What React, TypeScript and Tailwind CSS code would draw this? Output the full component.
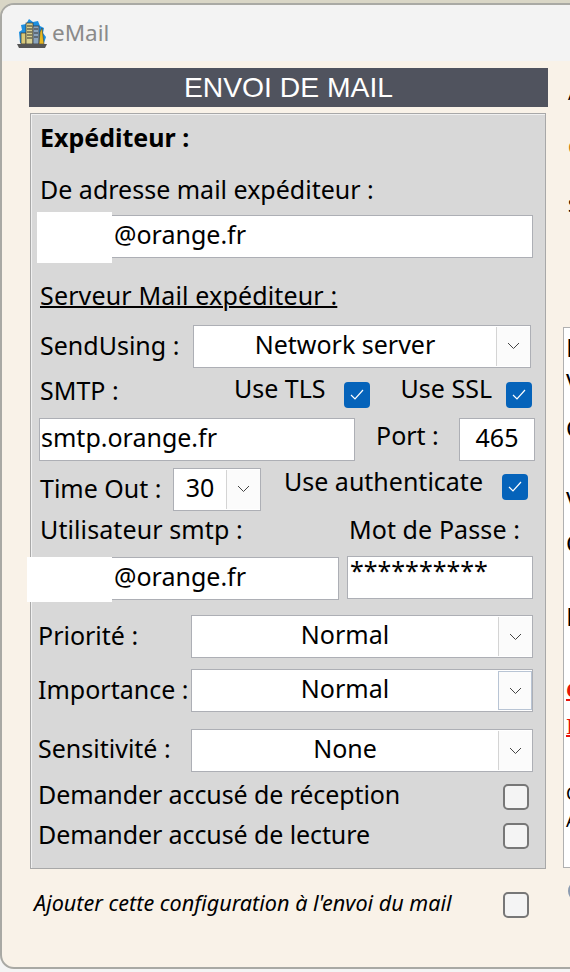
const sans = "font-['Noto_Sans','Open_Sans',sans-serif]";

function Chevron() {
  return (
    <svg width="13" height="8" viewBox="0 0 13 8" fill="none" stroke="#444" strokeWidth="1">
      <path d="M1 1l5.5 5.5L12 1" />
    </svg>
  );
}

function Select({ value, className }: { value: string; className: string }) {
  return (
    <div className={`flex h-[43px] items-center border border-[#adafb5] bg-white text-[25px] text-black ${className}`}>
      <span className="flex-1 pb-[3px] text-center">{value}</span>
      <span className="my-[1px] flex h-[39px] w-[34px] items-center justify-center border-l border-[#d4d4d4] bg-[#fbfbfb]">
        <Chevron />
      </span>
    </div>
  );
}

function Check({ on }: { on?: boolean }) {
  if (on) {
    return (
      <span className="flex h-[26px] w-[26px] shrink-0 items-center justify-center rounded-[4px] bg-[#0563ba]">
        <svg width="14" height="11" viewBox="0 0 14 11" fill="none" stroke="#fff" strokeWidth="1.2">
          <path d="M1 6l4 4 8-9" />
        </svg>
      </span>
    );
  }
  return <span className="mt-[4px] h-[26px] w-[26px] shrink-0 rounded-[5px] border-2 border-[#777] bg-[#f4f4f4]" />;
}

function Logo() {
  return (
    <svg width="32" height="32" viewBox="0 0 32 32">
      <path d="M4 26L3 15l3-2-1-5 5-1 3-5 4 3 5-1 2 5 4 2-1 5 3 4-2 6z" fill="#1d8fe0" />
      <rect x="5" y="16" width="5" height="11" fill="#d8c878" stroke="#333" strokeWidth="0.7" />
      <rect x="10" y="6" width="7" height="21" fill="#d8d090" stroke="#333" strokeWidth="0.7" />
      <rect x="17" y="9" width="6" height="18" fill="#8aa4bc" stroke="#333" strokeWidth="0.7" />
      <path d="M23 27l1-12 2-4 2 16z" fill="#e8b820" stroke="#333" strokeWidth="0.5" />
      <path d="M11 9h5M11 12h5M11 15h5M11 18h5M11 21h5M18 12h4M18 16h4M18 20h4" stroke="#333" strokeWidth="1" />
      <path d="M1 27h30l-2 4H3z" fill="#555" />
    </svg>
  );
}

export default function App() {
  return (
    <div className={`h-[972px] w-[570px] overflow-hidden bg-[linear-gradient(#d9d6c6_0_40px,#f4f4f4_40px)] pt-[3px] ${sans}`}>
      <div className="h-[966px] w-[620px] overflow-hidden rounded-[14px] border-2 border-[#a9a9a4] bg-[#f9f2e8]">
        <div className="flex h-[56px] items-center gap-[4px] bg-[#f3f3f3] pl-[14px]">
          <Logo />
          <span className="text-[22.5px] text-[#8a8a8a]">eMail</span>
        </div>
        <div className="flex">
          <div className="ml-[27px] mt-[7px] w-[519px] shrink-0">
            <div className="flex h-[39px] items-center justify-center bg-[#50535e] font-['Liberation_Sans'] text-[28.3px] text-white">
              ENVOI DE MAIL
            </div>
            <div className="ml-[1px] mt-[6px] h-[756px] w-[516px] border border-[#a8a8a8] bg-[#d8d8d8] text-[25px] text-black shadow-[inset_1px_1px_0_#f0f0f0]">
              <div className="pl-[9px] pt-[5px] font-bold">Expéditeur :</div>
              <div className="pl-[9px] pt-[14px]">De adresse mail expéditeur :</div>
              <div className="relative ml-[7px] mt-[7px] flex h-[43px] w-[495px] items-center border border-[#adafb5] bg-white pb-[4px] pl-[75px]">
                @orange.fr
                <span className="absolute left-[-2px] top-[-4px] h-[51px] w-[75px] bg-white" />
              </div>
              <div className="pl-[9px] pt-[19px] tracking-[0.15px] underline decoration-2">Serveur Mail expéditeur :</div>
              <div className="flex items-center pl-[9px] pt-[10px]">
                <span className="w-[153px]">SendUsing :</span>
                <Select value="Network server" className="w-[338px]" />
              </div>
              <div className="flex h-[50px] pl-[9px]">
                <span className="mt-[4px] w-[194px]">SMTP :</span>
                <span className="mt-[2px]">Use TLS</span>
                <span className="ml-[18px] mt-[14px]"><Check on /></span>
                <span className="ml-[31px] mt-[2px]">Use SSL</span>
                <span className="ml-[14px] mt-[14px]"><Check on /></span>
              </div>
              <div className="flex items-start pl-[8px]">
                <div className="flex h-[43px] w-[316px] items-center border border-[#adafb5] bg-white pb-[3px] pl-[1px]">smtp.orange.fr</div>
                <span className="ml-[21px] w-[83px] leading-[34px]">Port :</span>
                <div className="flex h-[43px] w-[76px] items-center justify-center border border-[#adafb5] bg-white pb-[3px]">465</div>
              </div>
              <div className="flex pl-[9px] pt-[7px]">
                <span className="mt-[2px] w-[133px]">Time Out :</span>
                <Select value="30" className="w-[88px]" />
                <span className="ml-[23px] mt-[-5px]">Use authenticate</span>
                <span className="ml-[19px] mt-[6px]"><Check on /></span>
              </div>
              <div className="flex justify-between pl-[9px] pr-[25px] tracking-[0.1px]">
                <span>Utilisateur smtp :</span>
                <span>Mot de Passe :</span>
              </div>
              <div className="flex items-start pl-[7px] pt-[8px]">
                <div className="relative mt-[1px] flex h-[43px] w-[301px] items-center border border-[#adafb5] bg-white pb-[3px] pl-[75px]">
                  @orange.fr
                  <span className="absolute left-[-12px] top-[-1px] h-[45px] w-[85px] bg-white" />
                </div>
                <div className="ml-[8px] h-[43px] w-[186px] border border-[#adafb5] bg-white pl-[2px] leading-[26px]">**********</div>
              </div>
              <div className="flex items-center pl-[7px] pt-[15px]">
                <span className="w-[153px] pb-[2px]">Priorité :</span>
                <Select value="Normal" className="w-[342px]" />
              </div>
              <div className="flex items-center pl-[7px] pt-[11px]">
                <span className="w-[153px] pb-[2px]">Importance :</span>
                <Select value="Normal" className="w-[342px] [&>span:last-child]:border [&>span:last-child]:border-[#b8c4d4]" />
              </div>
              <div className="flex items-center pl-[7px] pt-[17px]">
                <span className="w-[153px] pb-[4px]">Sensitivité :</span>
                <Select value="None" className="w-[342px]" />
              </div>
              <div className="flex items-center justify-between pl-[7px] pr-[16px] pt-[4px] tracking-[-0.1px]">
                <span>Demander accusé de réception</span>
                <Check />
              </div>
              <div className="flex items-center justify-between pl-[7px] pr-[16px] pt-[2px] tracking-[-0.1px]">
                <span>Demander accusé de lecture</span>
                <Check />
              </div>
            </div>
            <div className="flex items-center justify-between pl-[5px] pr-[19px] pt-[18px] text-[21.6px] italic text-black">
              <span>Ajouter cette configuration à l'envoi du mail</span>
              <Check />
            </div>
          </div>

          <div className="ml-[15px] w-[60px] shrink-0 text-black">
            <div className="mt-[22px] h-[20px] pl-[5px] text-[18px] leading-[20px]">A</div>
            <div className="mt-[34px] h-[20px] pl-[5px] text-[18px] leading-[20px] text-[#c8791e]">C</div>
            <div className="mt-[38px] h-[20px] pl-[5px] text-[18px] leading-[20px]">S</div>
            <div className="mt-[112px] h-[541px] overflow-hidden border border-[#b0b0b0] bg-white pl-[2px]">
              <div className="h-[38px] text-[26px] leading-[38px]">Dans</div>
              <div className="h-[31px] text-[24px] leading-[31px]">Vous</div>
              <div className="h-[61px] text-[24px] leading-[61px]">Ce</div>
              <div className="mt-[27px] h-[30px] text-[24px] leading-[30px]">Vous</div>
              <div className="h-[55px] text-[24px] leading-[55px]">Ce</div>
              <div className="h-[92px] text-[26px] leading-[92px]">Dans</div>
              <div className="mt-[13px] h-[30px] font-['Liberation_Serif'] text-[24px] font-bold leading-[30px] text-[#e8150c] underline decoration-2">Ce</div>
              <div className="mt-[6px] h-[30px] font-['Liberation_Serif'] text-[24px] font-bold leading-[30px] text-[#e8150c] underline decoration-2">Il</div>
              <div className="mt-[40px] h-[24px] text-[18px] leading-[24px]">Ce</div>
              <div className="mt-[3px] h-[24px] text-[18px] leading-[24px]">A</div>
            </div>
            <div className="ml-[5px] mt-[12px] h-[22px] w-[22px] rounded-full border-2 border-[#8b9bb0]" />
          </div>
        </div>
      </div>
    </div>
  );
}
